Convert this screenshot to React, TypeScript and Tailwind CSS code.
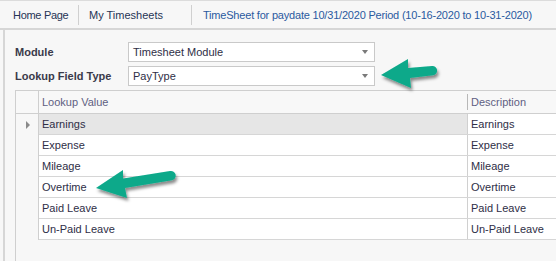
import { ReactNode } from "react"

const rows = ['Earnings', 'Expense', 'Mileage', 'Overtime', 'Paid Leave', 'Un-Paid Leave']

const Combo = ({ value }: { value: string }) => (
    <div className="flex h-[20px] w-[247px] items-center justify-between border border-[#c9c9c9] bg-white pl-[4px] pr-[6px] text-[#2e2e46]">
        <span>{value}</span>
        <span className="h-0 w-0 border-x-[3.5px] border-t-[4px] border-x-transparent border-t-[#7a7a7a]" />
    </div>
)

const Tab = ({ children, className }: { children: ReactNode, className: string }) => (
    <div className={`whitespace-nowrap ${className}`}>{children}</div>
)

const Arrows = () => (
    <svg className="pointer-events-none absolute left-0 top-0" width="556" height="261">
        <defs>
            <filter id="sh" x="-20%" y="-20%" width="140%" height="160%">
                <feDropShadow dx="1.5" dy="3" stdDeviation="1.6" floodColor="#000" floodOpacity="0.45" />
            </filter>
        </defs>
        <path d="M381,75 L408,59 L408,68 L432,66 A4.6,4.6 0 0 1 433,75.2 L410,78 L411,88 Z" fill="#0aa98a" filter="url(#sh)" />
        <path d="M96,188 L123,170 L123,178.5 L170,171 A4.6,4.6 0 0 1 172,180.2 L125,188 L127,198 Z" fill="#0aa98a" filter="url(#sh)" />
    </svg>
)

export default function App() {
    return (
        <div className="relative h-[261px] w-[556px] overflow-hidden bg-[#f7f7f7] text-[11px] leading-[16px] font-['Liberation_Sans',Arial,sans-serif]">
            {/* top tab strip */}
            <div className="flex h-[30px] items-center border-t border-b-2 border-t-[#dcdcdc] border-b-[#d6d6d6]">
                <Tab className="w-[78px] pl-[13px] tracking-[-0.3px] text-[#263455]">Home Page</Tab>
                <div className="h-[20px] w-px bg-[#d0d0d0]" />
                <Tab className="w-[112px] pl-[10px] text-[#263455]">My Timesheets</Tab>
                <div className="h-[20px] w-px bg-[#d0d0d0]" />
                <Tab className="pl-[11px] tracking-[-0.2px] text-[#2a5aa0]">TimeSheet for paydate 10/31/2020 Period (10-16-2020 to 10-31-2020)</Tab>
            </div>

            <div className="ml-[3px] h-[231px] border-l-2 border-[#d6d6d6] pl-[10px] pt-[12px]">
                <div className="flex flex-col gap-[4px]">
                    <div className="flex items-center">
                        <div className="w-[113px] font-bold text-[#3a3a4a]">Module</div>
                        <Combo value="Timesheet Module" />
                    </div>
                    <div className="flex items-center">
                        <div className="w-[113px] font-bold text-[#3a3a4a]">Lookup Field Type</div>
                        <Combo value="PayType" />
                    </div>
                </div>

                {/* grid */}
                <div className="mt-[4px] h-[200px] border-l border-t border-[#cfcfcf] text-[#2e2e46]">
                    <div className="flex h-[23px] border-b border-[#cfcfcf] bg-[#f8f8f8] text-[#5f5f82]">
                        <div className="w-[23px] border-r border-[#cfcfcf]" />
                        <div className="flex w-[428px] items-center pl-[3px]">Lookup Value</div>
                        <div className="my-[3px] w-px bg-[#b8b8b8]" />
                        <div className="flex flex-1 items-center pl-[3px]">Description</div>
                    </div>
                    <div className="flex">
                        <div className="w-[23px] border-r border-[#cfcfcf]">
                            <div className="flex h-[21px] items-center pl-[10px]">
                                <span className="h-0 w-0 border-y-[4px] border-l-[4px] border-y-transparent border-l-[#8a8a8a]" />
                            </div>
                        </div>
                        <div className="flex-1">
                            {rows.map((r, i) => (
                                <div key={r} className={`flex h-[21px] border-b border-[#d6d6d6] ${i === 0 ? 'bg-[#e6e6e6]' : 'bg-white'}`}>
                                    <div className="flex w-[428px] items-center pl-[3px]">{r}</div>
                                    <div className={`flex flex-1 items-center border-l border-[#d0d0d0] pl-[3px] ${i === 0 ? 'bg-white' : ''}`}>{r}</div>
                                </div>
                            ))}
                        </div>
                    </div>
                </div>
            </div>
            <Arrows />
        </div>
    )
}
